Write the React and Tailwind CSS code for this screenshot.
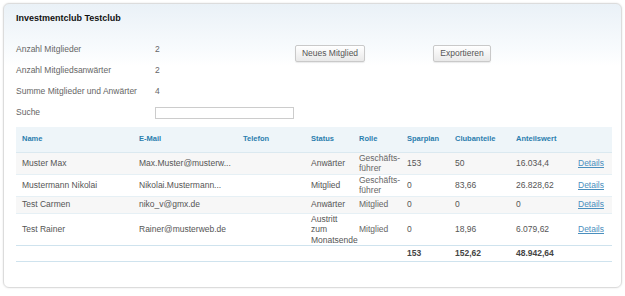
import React from 'react';

const rows = [
  { name: 'Muster Max', mail: 'Max.Muster@musterw...', status: ['Anwärter'], rolle: ['Geschäfts-', 'führer'], spar: '153', club: '50', wert: '16.034,4', bg: 'bg-[#f7f7f7]' },
  { name: 'Mustermann Nikolai', mail: 'Nikolai.Mustermann...', status: ['Mitglied'], rolle: ['Geschäfts-', 'führer'], spar: '0', club: '83,66', wert: '26.828,62', bg: 'bg-white' },
  { name: 'Test Carmen', mail: 'niko_v@gmx.de', status: ['Anwärter'], rolle: ['Mitglied'], spar: '0', club: '0', wert: '0', bg: 'bg-[#f7f7f7]' },
  { name: 'Test Rainer', mail: 'Rainer@musterweb.de', status: ['Austritt', 'zum', 'Monatsende'], rolle: ['Mitglied'], spar: '0', club: '18,96', wert: '6.079,62', bg: 'bg-white' },
];

const info = [
  ['Anzahl Mitglieder', '2'],
  ['Anzahl Mitgliedsanwärter', '2'],
  ['Summe Mitglieder und Anwärter', '4'],
];

const Btn = ({ children, w }) => (
  <button className={`${w} h-[17px] border border-[#c9c9c9] rounded-[2px] bg-gradient-to-b from-white to-[#e9e9e9] text-[#555] text-[8.5px] leading-none shadow-[0_1px_1px_rgba(0,0,0,0.08)]`}>
    {children}
  </button>
);

const App = () => {
  return (
    <div className="w-[625px] h-[296px] bg-white pt-[3px] pl-[3px] font-['Liberation_Sans',Arial,sans-serif] text-[#555]">
      <div className="w-[619px] h-[285px] rounded-[6px] border border-[#dcdcdc] shadow-[0_0_2px_rgba(0,0,0,0.12)] bg-gradient-to-b from-[#eaf1f7] via-[#f8fbfd] via-[16%] to-white to-[22%] px-[12px]">
        {/* Header */}
        <div className="h-[35px] pt-[9px] text-[9px] font-bold text-[#111] leading-[11px]">
          Investmentclub Testclub
        </div>

        {/* Info + buttons */}
        <div className="flex">
          <div className="w-[279px]">
            {info.map(([label, value]) => (
              <div key={label} className="flex h-[21px] items-center text-[8.5px] text-[#666]">
                <div className="w-[139px]">{label}</div>
                <div>{value}</div>
              </div>
            ))}
            <div className="flex h-[21px] items-center text-[8.5px] text-[#666]">
              <div className="w-[139px]">Suche</div>
              <input className="w-[139px] h-[12px] border border-[#ccc] bg-white outline-none" />
            </div>
          </div>
          <div className="flex gap-[68px] pt-[6px] items-start">
            <Btn w="w-[70px]">Neues Mitglied</Btn>
            <Btn w="w-[58px]">Exportieren</Btn>
          </div>
        </div>

        {/* Table */}
        <table className="mt-[4px] w-[596px] border-collapse table-fixed text-[8.5px] leading-[10.5px] text-[#555]">
          <colgroup>
            <col className="w-[117px]" />
            <col className="w-[104px]" />
            <col className="w-[68px]" />
            <col className="w-[48px]" />
            <col className="w-[48px]" />
            <col className="w-[48px]" />
            <col className="w-[61px]" />
            <col className="w-[62px]" />
            <col className="w-[40px]" />
          </colgroup>
          <thead>
            <tr className="h-[25px] bg-[#eef5f9] text-[#2b7eae] text-[7.5px] font-bold border-b border-[#dbe9f0]">
              <th className="text-left font-bold pl-[6px]">Name</th>
              <th className="text-left font-bold pl-[6px]">E-Mail</th>
              <th className="text-left font-bold pl-[6px]">Telefon</th>
              <th className="text-left font-bold pl-[6px]">Status</th>
              <th className="text-left font-bold pl-[6px]">Rolle</th>
              <th className="text-left font-bold pl-[6px]">Sparplan</th>
              <th className="text-left font-bold pl-[6px]">Clubanteile</th>
              <th className="text-left font-bold pl-[6px]">Anteilswert</th>
              <th></th>
            </tr>
          </thead>
          <tbody>
            {rows.map((r, i) => (
              <tr key={r.name} className={`h-[17px] ${r.bg} border-b ${i === rows.length - 1 ? 'border-[#cfe3ee]' : 'border-[#e6f0f5]'}`}>
                <td className="pl-[6px] whitespace-nowrap">{r.name}</td>
                <td className="pl-[6px] whitespace-nowrap">{r.mail}</td>
                <td className="pl-[6px]"></td>
                <td className="pl-[6px]">
                  {r.status.map((s) => <div key={s}>{s}</div>)}
                </td>
                <td className="pl-[6px] text-[#666]">
                  {r.rolle.map((s) => <div key={s}>{s}</div>)}
                </td>
                <td className="pl-[6px]">{r.spar}</td>
                <td className="pl-[6px]">{r.club}</td>
                <td className="pl-[6px]">{r.wert}</td>
                <td className="pl-[6px]">
                  <a href="#" className="text-[#4a8fbe] underline">Details</a>
                </td>
              </tr>
            ))}
            <tr className="h-[16px] border-b border-[#cfe3ee] font-bold text-[#444]">
              <td></td>
              <td></td>
              <td></td>
              <td></td>
              <td></td>
              <td className="pl-[6px]">153</td>
              <td className="pl-[6px]">152,62</td>
              <td className="pl-[6px]">48.942,64</td>
              <td></td>
            </tr>
          </tbody>
        </table>
      </div>
    </div>
  );
};

export default App;
